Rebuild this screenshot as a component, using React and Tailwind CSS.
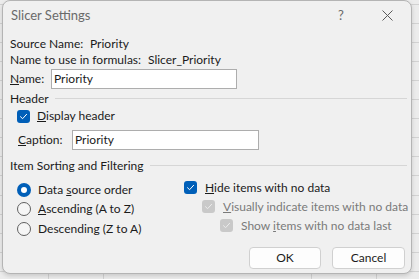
import React from 'react';

const font = { fontFamily: '"Segoe UI", Lato, "Noto Sans", sans-serif' };

const Check = ({ disabled }) => (
  <span
    className={`w-[13px] h-[13px] rounded-[3px] flex items-center justify-center shrink-0 ${
      disabled ? 'bg-[#c9c9c9]' : 'bg-[#005fb8]'
    }`}
  >
    <svg width="9" height="9" viewBox="0 0 9 9" fill="none">
      <path
        d="M1.5 4.7 L3.6 6.7 L7.6 2.3"
        stroke={disabled ? '#ececec' : '#ffffff'}
        strokeWidth="1"
        strokeLinecap="round"
        strokeLinejoin="round"
      />
    </svg>
  </span>
);

const Radio = ({ on }) =>
  on ? (
    <span className="w-[14px] h-[14px] rounded-full bg-[#005fb8] flex items-center justify-center shrink-0">
      <span className="w-[6px] h-[6px] rounded-full bg-white" />
    </span>
  ) : (
    <span className="w-[14px] h-[14px] rounded-full border border-[#606060] bg-[#f6f6f6] shrink-0" />
  );

const Group = ({ title }) => (
  <div className="flex items-center h-4 pr-[4px]">
    <span className="whitespace-nowrap">{title}</span>
    <div className="flex-1 h-px bg-[#d6d6d6] ml-[6px] mt-[-1px]" />
  </div>
);

export default function App() {
  const rows = [4, 23, 42, 61, 80, 99, 118, 137, 156, 175, 195, 214, 233, 252, 271];
  const cols = [48, 103, 311, 376];
  return (
    <div className="relative w-[419px] h-[279px] bg-[#ececec] overflow-hidden text-[12px] text-[#1b1b1b] whitespace-nowrap" style={font}>
      {rows.map((y) => (
        <div key={y} className="absolute left-0 right-0 h-px bg-[#d2d2d2]" style={{ top: y }} />
      ))}
      {cols.map((x) => (
        <div key={x} className="absolute top-0 bottom-0 w-px bg-[#d2d2d2]" style={{ left: x }} />
      ))}

      <div className="absolute left-[2px] top-0 w-[410px] h-[274px] rounded-[8px] border border-[#b4b4b4] bg-[#f0f0f0] shadow-[0_2px_4px_rgba(0,0,0,0.15)] flex flex-col">
        <div className="h-[29px] flex items-center pl-[8px] text-[13px] text-[#6a6a6a]">
          <span className="flex-1">Slicer Settings</span>
          <span className="w-[14px] text-[13px] mr-[30px]">?</span>
          <svg width="11" height="11" viewBox="0 0 11 11" className="mr-[18px]">
            <path d="M0.5 0.5 L10.5 10.5 M10.5 0.5 L0.5 10.5" stroke="#5a5a5a" strokeWidth="1" />
          </svg>
        </div>

        <div className="flex flex-col pl-[7px]">
          <div className="h-4 mt-[6px] flex items-center">
            <span className="w-[80px] shrink-0">Source Name:</span>
            <span>Priority</span>
          </div>
          <div className="h-4 flex items-center">
            <span className="w-[138px] shrink-0">Name to use in formulas:</span>
            <span>Slicer_Priority</span>
          </div>
          <div className="h-[20px] mt-[1px] flex items-center">
            <span className="w-[41px] shrink-0">
              <u>N</u>ame:
            </span>
            <div className="w-[186px] h-[20px] bg-white border border-[#adadad] flex items-center pl-[2px]">Priority</div>
          </div>

          <div className="mt-[2px]">
            <Group title="Header" />
          </div>
          <div className="h-4 mt-[1px] flex items-center pl-[7px] gap-[7px]">
            <Check />
            <span>
              <u>D</u>isplay header
            </span>
          </div>
          <div className="h-[20px] mt-[6px] flex items-center pl-[8px]">
            <span className="w-[54px] shrink-0">
              <u>C</u>aption:
            </span>
            <div className="w-[187px] h-[20px] bg-white border border-[#adadad] flex items-center pl-[2px]">Priority</div>
          </div>

          <div className="mt-[8px]">
            <Group title="Item Sorting and Filtering" />
          </div>

          <div className="flex mt-[4px]">
            <div className="w-[174px] shrink-0 flex flex-col pl-[7px] pt-[2px]">
              <div className="h-[19px] flex items-center gap-[7px]">
                <Radio on />
                <span>
                  Data <u>s</u>ource order
                </span>
              </div>
              <div className="h-[20px] flex items-center gap-[7px]">
                <Radio />
                <span>
                  <u>A</u>scending (A to Z)
                </span>
              </div>
              <div className="h-[19px] flex items-center gap-[7px]">
                <Radio />
                <span>
                  Descendin<u>g</u> (Z to A)
                </span>
              </div>
            </div>
            <div className="flex flex-col">
              <div className="h-[19px] flex items-center gap-[8px]">
                <Check />
                <span>
                  <u>H</u>ide items with no data
                </span>
              </div>
              <div className="h-[19px] flex items-center gap-[8px] pl-[18px] text-[#7a7a7a]">
                <Check disabled />
                <span>
                  <u>V</u>isually indicate items with no data
                </span>
              </div>
              <div className="h-[19px] flex items-center gap-[8px] pl-[36px] text-[#7a7a7a]">
                <Check disabled />
                <span>
                  Show <u>i</u>tems with no data last
                </span>
              </div>
            </div>
          </div>

          <div className="flex justify-end gap-[11px] pr-[6px] mt-[9px]">
            <button className="w-[72px] h-[22px] bg-[#fdfdfd] border border-[#d0d0d0] rounded-[4px]">OK</button>
            <button className="w-[73px] h-[22px] bg-[#fdfdfd] border border-[#d0d0d0] rounded-[4px]">Cancel</button>
          </div>
        </div>
      </div>
    </div>
  );
}
